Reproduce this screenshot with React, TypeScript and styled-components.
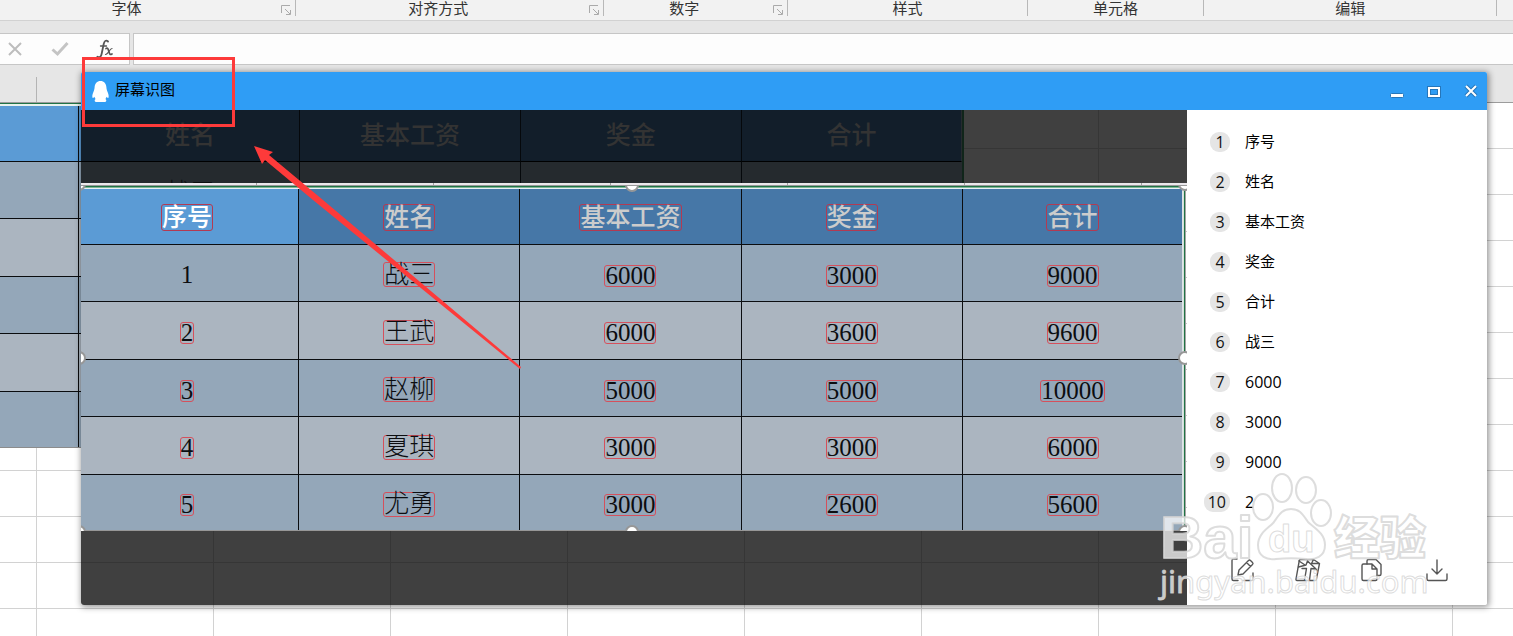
import React from 'react';
import styled, { createGlobalStyle, css } from 'styled-components';

const uiFont = `"Noto Sans CJK SC", "Noto Sans", sans-serif`;
const songFont = `"Liberation Serif", "Noto Sans CJK SC", serif`;
const danger = '#fd3a3a';

const GlobalStyle = createGlobalStyle`
  * { box-sizing: border-box; }
  body { margin: 0; font-family: ${uiFont}; background: #fff; }
  button { border: 0; padding: 0; background: none; font: inherit; color: inherit; }
  ul, ol { list-style: none; margin: 0; padding: 0; }
  svg { display: block; }
`;

const gridLines = (color: string, x: number, y: number) => css`
  background-image:
    linear-gradient(to right, ${color} 1px, transparent 1px),
    linear-gradient(to bottom, ${color} 1px, transparent 1px);
  background-size: 177px 46px;
  background-position: ${x}px ${y}px;
`;

const Page = styled.div`
  position: relative;
  min-height: 100vh;
  display: flex;
  flex-direction: column;
  overflow: hidden;
  background: #fff;
`;

/* ---------- spreadsheet behind the window ---------- */

const Ribbon = styled.div`
  display: flex;
  align-items: flex-start;
  height: 21px;
  background: #f2f2f2;
  border-bottom: 1px solid #d2d2d2;
`;

const RibbonGroup = styled.div<{ $grow: number; $inset?: number }>`
  flex: ${p => p.$grow} 1 0;
  display: flex;
  align-items: center;
  height: 16px;
  border-right: 1px solid #b8b8b8;
  &:last-child { border-right: 0; }
  > span { padding-right: ${p => p.$inset ?? 0}px; }
`;

const RibbonLabel = styled.span`
  flex: 1;
  text-align: center;
  font-size: 15px;
  line-height: 16px;
  color: #333;
`;

const Launcher = styled.button`
  width: 10px;
  height: 10px;
  margin: 4px 4px 0 8px;
`;

const FormulaBar = styled.div`
  display: flex;
  gap: 3px;
  margin-top: 12px;
  background: #e6e6e6;
`;

const FormulaTools = styled.div`
  display: flex;
  align-items: center;
  justify-content: space-between;
  width: 130px;
  height: 32px;
  padding: 0 15px 0 7px;
  background: #fdfdfd;
  border: 1px solid #c6c6c6;
  border-left: 0;
`;

const FormulaButton = styled.button`
  display: block;
`;

const FormulaInput = styled.input`
  flex: 1;
  min-width: 0;
  height: 32px;
  padding: 0 8px;
  border: 1px solid #c6c6c6;
  border-right: 0;
  background: #fdfdfd;
  font: 15px ${uiFont};
  outline: 0;
`;

const SheetTop = styled.div`
  background: #e6e6e6;
`;

const ColumnHeads = styled.div`
  display: flex;
  align-items: flex-end;
  height: 38px;
  border-bottom: 1px solid #9c9c9c;
`;

const ColumnHead = styled.div`
  width: 37px;
  height: 25px;
  border-right: 1px solid #b4b4b4;
`;

const Sheet = styled.div`
  flex: 1;
  ${gridLines('#d2d2d2', 36, 45)}
`;

const SheetTable = styled.div`
  width: 81px;
  border-top: 1px solid #217346;
  padding-top: 2px;
  background: #e8f2ec;
  border-bottom: 1px solid #8c8c8c;
`;

const band = {
  head: '#5b9bd5',
  headSelected: '#4677a7',
  odd: '#94a7b9',
  even: '#abb5c0',
};

const SheetCell = styled.div<{ $fill: string; $height: number }>`
  display: flex;
  height: ${p => p.$height}px;
  background: ${p => p.$fill};
  border-bottom: 1px solid #0a0c0e;
  &:last-child { border-bottom: 0; }
  &::before {
    content: '';
    width: 78px;
    border-right: 1px solid #0a0c0e;
  }
`;

/* ---------- recognition window ---------- */

const Window = styled.section`
  position: absolute;
  top: 72px;
  left: 81px;
  right: 26px;
  border-radius: 2px;
  box-shadow: 1px 1px 6px 1px rgba(0, 0, 0, 0.42);
  background: #fff;
`;

const TitleBar = styled.header`
  display: flex;
  align-items: center;
  height: 38px;
  padding: 0 7px 0 11px;
  background: #2f9df5;
  border-radius: 2px 2px 0 0;
`;

const Title = styled.h1`
  flex: 1;
  margin: 0 0 4px 6px;
  font-size: 15px;
  line-height: 20px;
  font-weight: 400;
  color: #000;
`;

const WindowButton = styled.button`
  width: 18px;
  height: 18px;
  display: grid;
  place-items: center;
  margin-left: 19px;
`;

const WindowBody = styled.div`
  display: flex;
  border-radius: 0 0 3px 3px;
  overflow: hidden;
`;

const Capture = styled.main`
  flex: 1;
  min-width: 0;
  display: flex;
  flex-direction: column;
  background: #404040;
`;

const Dimmed = styled.div`
  display: flex;
  height: 73px;
  overflow: hidden;
`;

const DimTable = styled.div`
  flex: 883 1 0;
  display: grid;
  grid-template-columns: 219px repeat(3, 1fr);
  grid-template-rows: 52px 62px;
  border-right: 2px solid #10251a;
`;

const DimCell = styled.div<{ $head?: boolean }>`
  display: flex;
  align-items: center;
  justify-content: center;
  border-right: 1px solid #05080b;
  border-bottom: 1px solid #000;
  background: ${p => (p.$head ? '#121e2a' : '#252a2e')};
  color: ${p => (p.$head ? '#333' : '#0c0d0e')};
  font-size: 25px;
  line-height: 26px;
  font-family: ${songFont};
  font-weight: ${p => (p.$head ? 500 : 300)};
  &:nth-child(4n) { border-right-color: #252a2e; }
`;

const DimSheet = styled.div<{ $x: number; $y: number }>`
  flex: 223 1 0;
  ${p => gridLines('#363636', p.$x, p.$y)}
`;

const DimFooter = styled(DimSheet)`
  flex: 0 0 74px;
`;

const Selection = styled.div`
  position: relative;
  border-bottom: 1px solid #979797;
  background: #e8ecee;
`;

const SelectionTop = styled.div`
  height: 6px;
  background:
    linear-gradient(to right, transparent 176px, #a0a0a0 176px) -1px 0 / 177px 2px repeat-x,
    linear-gradient(to bottom, #ebe8ec 0 2px, #9a9a9a 2px 3px, #217346 3px 4px, #7fb596 4px 5px, #e9f0f5 5px 6px);
`;

const SelectionRow = styled.div`
  display: flex;
`;

const SelectionEdge = styled.div`
  width: 5px;
  background:
    linear-gradient(to bottom, #c8c8c8 1px, transparent 1px) 4px 42px / 1px 46px repeat-y,
    linear-gradient(to right, #dfe4e9 0 1px, #d3e2da 1px 2px, #217346 2px 3px, #a5a5a5 3px 4px, #fff 4px 5px);
`;

const DataTable = styled.table`
  flex: 1;
  width: 100%;
  table-layout: fixed;
  border-collapse: separate;
  border-spacing: 0;
  font-family: ${songFont};
  font-size: 25px;
`;

const Row = styled.tr<{ $height: number; $fill: string }>`
  height: ${p => p.$height}px;
  background: ${p => p.$fill};
  &:last-child > td { border-bottom: 0; }
`;

const cell = css`
  padding: 2px 0 0;
  text-align: center;
  vertical-align: middle;
  line-height: 24px;
  border-right: 1px solid #0b0d10;
  border-bottom: 1px solid #0b0d10;
  &:first-child { padding-right: 5px; width: 218px; }
  &:last-child { border-right: 0; width: 219px; }
`;

const HeadCell = styled.th<{ $active?: boolean }>`
  ${cell}
  font-weight: 500;
  color: ${p => (p.$active ? '#fff' : '#ccc')};
  background: ${p => (p.$active ? band.head : band.headSelected)};
`;

const BodyCell = styled.td`
  ${cell}
  font-weight: 300;
  color: #0c0d10;
`;

const Detected = styled.span<{ $kind: 'head' | 'hanzi' | 'digits' | 'plain' }>`
  display: inline-flex;
  align-items: center;
  height: ${p => (p.$kind === 'digits' ? 22 : p.$kind === 'head' ? 27 : 25)}px;
  vertical-align: middle;
  border: 1px solid ${p => (p.$kind === 'plain' ? 'transparent' : p.$kind === 'head' ? '#b33a52' : '#d5505c')};
  border-radius: 3px;
`;

const HandleLayer = styled.div`
  position: absolute;
  inset: 3px 0 -1px;
  overflow: hidden;
  pointer-events: none;
`;

const Handle = styled.i<{ $x: string; $y: string }>`
  position: absolute;
  left: ${p => p.$x};
  top: ${p => p.$y};
  width: 14px;
  height: 14px;
  margin: -7px 0 0 -7px;
  border: 2px solid #979797;
  border-radius: 50%;
  background: #fff;
`;

const Results = styled.aside`
  width: 300px;
  display: flex;
  flex-direction: column;
  justify-content: space-between;
  padding: 12px 0 22px;
  background: #fff;
`;

const ResultItem = styled.li`
  display: flex;
  align-items: center;
  height: 40px;
`;

const BadgeSlot = styled.div`
  width: 43px;
  display: flex;
  justify-content: flex-end;
`;

const Badge = styled.span`
  min-width: 20px;
  height: 20px;
  padding: 0 4px;
  border-radius: 9px;
  background: #e5e5e5;
  color: #111;
  font: 16px/20px "Open Sans", ${uiFont};
  text-align: center;
`;

const ResultText = styled.span<{ $digits: boolean }>`
  margin: 0 0 ${p => (p.$digits ? 0 : 2)}px 15px;
  color: #000;
  font-family: ${p => (p.$digits ? `"Open Sans", ${uiFont}` : uiFont)};
  font-size: ${p => (p.$digits ? 16 : 15)}px;
  line-height: 20px;
`;

const Actions = styled.div`
  display: flex;
  justify-content: space-between;
  padding: 0 37px 0 43px;
`;

const ActionButton = styled.button`
  width: 26px;
  height: 26px;
  color: #555;
`;

/* ---------- annotations ---------- */

const Frame = styled.div`
  position: absolute;
  left: 82px;
  top: 57px;
  width: 153px;
  height: 70px;
  border: 3px solid ${danger};
  pointer-events: none;
`;

const Arrow = styled.svg`
  position: absolute;
  left: 254px;
  top: 146px;
  pointer-events: none;
`;

const Watermark = styled.svg`
  position: absolute;
  right: 73px;
  top: 466px;
  pointer-events: none;
`;

const groups = [
  { label: '字体', grow: 296, inset: 20, launcher: true },
  { label: '对齐方式', grow: 308, launcher: true },
  { label: '数字', grow: 184, launcher: true },
  { label: '样式', grow: 240 },
  { label: '单元格', grow: 176 },
  { label: '编辑', grow: 293 },
  { label: '', grow: 16 },
];

const headers = ['序号', '姓名', '基本工资', '奖金', '合计'];
const rows = [
  ['1', '战三', '6000', '3000', '9000'],
  ['2', '王武', '6000', '3600', '9600'],
  ['3', '赵柳', '5000', '5000', '10000'],
  ['4', '夏琪', '3000', '3000', '6000'],
  ['5', '尤勇', '3000', '2600', '5600'],
];
const rowHeights = [57, 58, 57, 58, 55];
const results = ['序号', '姓名', '基本工资', '奖金', '合计', '战三', '6000', '3000', '9000', '2'];
const handles: [string, string][] = [
  ['-2px', '-2px'], ['calc(50% - 2px)', '-1px'], ['calc(100% - 2px)', '-2px'],
  ['-2px', '172px'], ['calc(100% - 2px)', '172px'],
  ['-2px', '346px'], ['calc(50% - 2px)', '346px'], ['calc(100% - 2px)', '346px'],
];

const LauncherIcon = () => (
  <svg width="10" height="10" viewBox="0 0 10 10" fill="none" stroke="#aaa">
    <path d="M.5 8V.5H9" />
    <path d="M4 4l5 5M9.500 5v4.500H5" />
  </svg>
);

const Penguin = () => (
  <svg width="17" height="21" viewBox="0 0 17 21" fill="#fff">
    <path d="M8.500 0C5 0 2.800 2.600 2.600 6.200c-.1 1.800-.5 3-1.100 4.500C.5 13.100 0 15 .5 16.400c.4 1 1.200.5 1.900-.6.300 1 .7 1.600 1.200 2.200-1.300.7-1.300 2.700.3 2.900h9.200c1.600-.2 1.600-2.200.3-2.900.5-.6.9-1.200 1.200-2.200.7 1.100 1.500 1.600 1.900.6.500-1.400 0-3.300-1-5.700-.6-1.500-1-2.700-1.100-4.500C14.200 2.600 12 0 8.500 0z" />
  </svg>
);

const ActionIcon = ({ children }: { children: React.ReactNode }) => (
  <svg width="26" height="26" viewBox="0 0 26 26" fill="none" stroke="currentColor" strokeWidth="1.400" strokeLinecap="round" strokeLinejoin="round">
    {children}
  </svg>
);

export default function App() {
  return (
    <Page>
      <GlobalStyle />
      <SheetTop>
        <Ribbon>
          {groups.map((g, i) => (
            <RibbonGroup key={i} $grow={g.grow} $inset={g.inset}>
              <RibbonLabel>{g.label}</RibbonLabel>
              {g.launcher && <Launcher aria-label={g.label}><LauncherIcon /></Launcher>}
            </RibbonGroup>
          ))}
        </Ribbon>
        <FormulaBar>
          <FormulaTools>
            <FormulaButton aria-label="取消">
              <svg width="16" height="16" viewBox="0 0 16 16" stroke="#bdbdbd" strokeWidth="2" fill="none">
                <path d="M2 2l12 12M14 2L2 14" />
              </svg>
            </FormulaButton>
            <FormulaButton aria-label="输入">
              <svg width="18" height="16" viewBox="0 0 18 16" stroke="#c4c4c4" strokeWidth="3" fill="none">
                <path d="M1.500 8.500L6.500 13L16.500 2" />
              </svg>
            </FormulaButton>
            <FormulaButton aria-label="插入函数">
              <svg width="18" height="20" viewBox="0 0 18 20" fill="none" stroke="#555" strokeLinecap="round">
                <path d="M12 2.500C10 .5 8.300 2 7.700 5L5.600 15c-.5 2.800-2.200 4-4.200 2.800" strokeWidth="1.800" />
                <path d="M4.500 7h6" strokeWidth="1.300" />
                <path d="M10 9.500c2-1 2.300 1 3 3.500s1.200 3 3 2" strokeWidth="1.700" />
                <path d="M16 9.500c-2 0-4 6-6.500 6" strokeWidth="1.200" />
              </svg>
            </FormulaButton>
          </FormulaTools>
          <FormulaInput aria-label="编辑栏" />
        </FormulaBar>
        <ColumnHeads><ColumnHead /></ColumnHeads>
      </SheetTop>
      <Sheet>
        <SheetTable>
          <SheetCell $fill={band.head} $height={56} />
          {rowHeights.map((h, i) => (
            <SheetCell key={i} $fill={i % 2 ? band.even : band.odd} $height={h} />
          ))}
        </SheetTable>
      </Sheet>

      <Window>
        <TitleBar>
          <Penguin />
          <Title>屏幕识图</Title>
          <WindowButton aria-label="最小化">
            <svg width="16" height="16" viewBox="0 0 16 16">
              <rect x="1.500" y="10.500" width="13" height="4" rx="1" fill="#fff" stroke="#2676ba" />
            </svg>
          </WindowButton>
          <WindowButton aria-label="最大化">
            <svg width="16" height="16" viewBox="0 0 16 16" fill="none">
              <rect x="3" y="5" width="10" height="8" stroke="#2676ba" strokeWidth="4" />
              <rect x="3" y="5" width="10" height="8" stroke="#fff" strokeWidth="2" />
            </svg>
          </WindowButton>
          <WindowButton aria-label="关闭">
            <svg width="16" height="16" viewBox="0 0 16 16" fill="none">
              <path d="M3 3l10 10M13 3L3 13" stroke="#2676ba" strokeWidth="4" />
              <path d="M3 3l10 10M13 3L3 13" stroke="#fff" strokeWidth="2" />
            </svg>
          </WindowButton>
        </TitleBar>
        <WindowBody>
          <Capture>
            <Dimmed>
              <DimTable>
                {headers.slice(1).map(h => <DimCell key={h} $head>{h}</DimCell>)}
                <DimCell>战三</DimCell><DimCell /><DimCell /><DimCell />
              </DimTable>
              <DimSheet $x={134} $y={38} />
            </Dimmed>
            <Selection>
              <SelectionTop />
              <SelectionRow>
                <DataTable>
                  <thead>
                    <Row $height={56} $fill={band.headSelected}>
                      {headers.map((h, i) => (
                        <HeadCell key={h} $active={i === 0}><Detected $kind="head">{h}</Detected></HeadCell>
                      ))}
                    </Row>
                  </thead>
                  <tbody>
                    {rows.map((r, i) => (
                      <Row key={i} $height={rowHeights[i]} $fill={i % 2 ? band.even : band.odd}>
                        {r.map((v, j) => (
                          <BodyCell key={j}>
                            <Detected $kind={v === '1' ? 'plain' : j === 1 ? 'hanzi' : 'digits'}>{v}</Detected>
                          </BodyCell>
                        ))}
                      </Row>
                    ))}
                  </tbody>
                </DataTable>
                <SelectionEdge />
              </SelectionRow>
              <HandleLayer>
                {handles.map(([x, y], i) => <Handle key={i} $x={x} $y={y} />)}
              </HandleLayer>
            </Selection>
            <DimFooter $x={132} $y={31} />
          </Capture>
          <Results>
            <ol>
              {results.map((r, i) => (
                <ResultItem key={i}>
                  <BadgeSlot><Badge>{i + 1}</Badge></BadgeSlot>
                  <ResultText $digits={/^\d+$/.test(r)}>{r}</ResultText>
                </ResultItem>
              ))}
            </ol>
            <Actions>
              <ActionButton aria-label="编辑">
                <ActionIcon>
                  <path d="M7 2H3.500Q2 2 2 3.500V22q0 1.500 1.500 1.500H8M13 23.500h8.500q1.500 0 1.500-1.500v-6" />
                  <path d="M8 18l1-5L18.500 3.500q1-1 2 0l2 2q1 1 0 2L13 17zM16.500 5.500l4 4" />
                </ActionIcon>
              </ActionButton>
              <ActionButton aria-label="翻译">
                <ActionIcon>
                  <path d="M17 2.500H5.500Q4.500 2.500 4.300 3.500L1 22q-.2 1.500 1 1.500H20q1 0 1.300-1L24.500 6.500L18.500 2.500zM18.500 2.500l-2 4 8 0" />
                  <path d="M3.500 10L11 8L12.500 4L21 12L16 11.500L14.500 23M12.500 4L11 8M4 4L10 8M11.500 11.500L9.500 23M11.500 11.500H7M21 12l1 2" />
                </ActionIcon>
              </ActionButton>
              <ActionButton aria-label="复制">
                <ActionIcon>
                  <path d="M8 7V4q0-1.500 1.500-1.500H17l5 5V17q0 1.500-1.500 1.500H18" />
                  <path d="M4.500 7H13l5 5v10q0 1.500-1.500 1.500h-12Q3 23.500 3 22V8.500Q3 7 4.500 7zM13 7v5h5" />
                </ActionIcon>
              </ActionButton>
              <ActionButton aria-label="下载">
                <ActionIcon>
                  <path d="M13 3v14M8 12l5 5 5-5M3 17v5q0 1.500 1.500 1.500h17Q23 23.500 23 22v-5" />
                </ActionIcon>
              </ActionButton>
            </Actions>
          </Results>
        </WindowBody>
      </Window>

      <Frame />
      <Arrow width="270" height="224" viewBox="0 0 270 224" fill={danger}>
        <path d="M0 0l19 6-4 3 54 45 198 167-1 2L59 54 11 14l-3 4z" />
      </Arrow>
      <Watermark width="284" height="140" viewBox="0 0 284 140" fill="#fff" fillOpacity="0.720" stroke="#d4d4d4" strokeOpacity="0.800" strokeWidth="2" strokeLinejoin="round">
        <g>
          <ellipse cx="107" cy="41" rx="10" ry="13" />
          <ellipse cx="126" cy="22" rx="10" ry="14" />
          <ellipse cx="150" cy="24" rx="10" ry="13" />
          <ellipse cx="165" cy="47" rx="10" ry="13" />
          <path d="M135 43c-9 0-12 6-17 13-5 6-16 11-16 23 0 12 9 15 18 14 9-1 21-1 30 0 9 1 19-2 19-14 0-12-11-17-17-23-5-7-8-13-17-13z" />
        </g>
        <text x="4" y="92" fontFamily="Liberation Sans, sans-serif" fontWeight="700" fontSize="60">Bai</text>
        <text x="112" y="86" fontFamily="Liberation Sans, sans-serif" fontWeight="700" fontSize="38" strokeWidth="1">du</text>
        <text x="178" y="88" fontFamily="Noto Sans CJK SC, sans-serif" fontWeight="900" fontSize="46">经验</text>
        <text x="4" y="127" fontFamily="Noto Sans, sans-serif" fontWeight="400" fontSize="31" strokeWidth="1">jingyan.baidu.com</text>
      </Watermark>
    </Page>
  );
}
